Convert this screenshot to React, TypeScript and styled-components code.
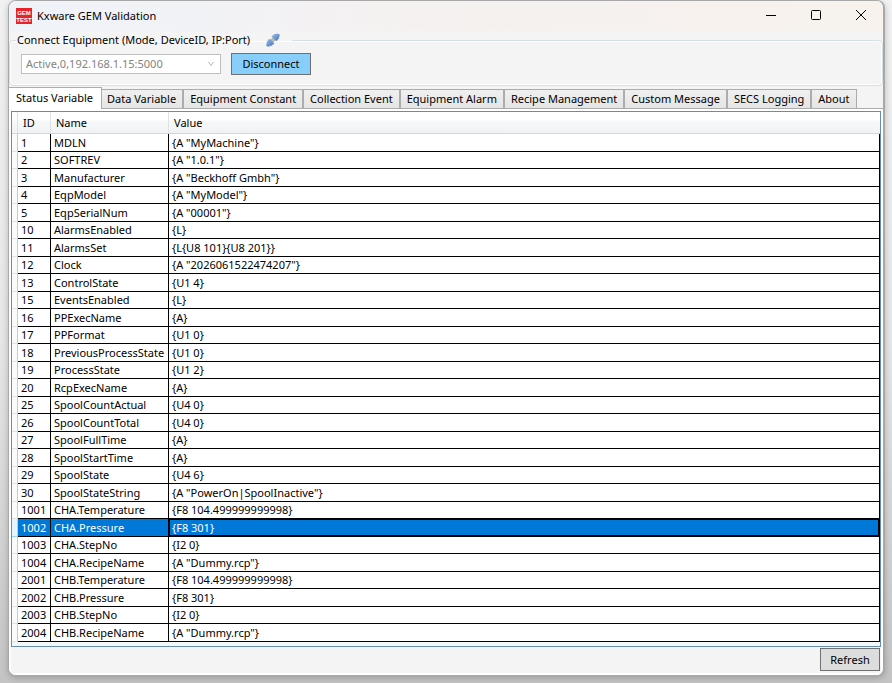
import React, { useState } from "react";
import styled, { createGlobalStyle, css } from "styled-components";

const GlobalStyle = createGlobalStyle`
  *, *::before, *::after { box-sizing: border-box; }
  body {
    margin: 0;
    font-family: "Noto Sans", "Open Sans", sans-serif;
    font-size: 11px;
    line-height: 16px;
    color: #000;
  }
  button, select { font: inherit; color: inherit; }
`;

const Desktop = styled.div`
  display: flex;
  min-height: 100vh;
  padding: 0 7px 7px 8px;
  background: linear-gradient(#f1f1f1, #e6e6e6 50%, #c4c4c4);
`;

const Window = styled.main`
  display: flex;
  flex: 1;
  flex-direction: column;
  min-width: 0;
  overflow: hidden;
  border: 1px solid #a8a8a8;
  border-right-width: 2px;
  border-radius: 8px;
  background: #f4f4f4;
  box-shadow: 0 2px 6px rgba(0, 0, 0, 0.22);
`;

const TitleBar = styled.header`
  display: flex;
  align-items: center;
  height: 30px;
  padding-left: 7px;
  background: linear-gradient(90deg, #eff3f9, #f5f1f0 50%, #f7f2ec);
`;

const Title = styled.h1`
  flex: 1;
  margin: 0 0 0 5px;
  font-size: 11px;
  font-weight: 400;
`;

const Caption = styled.button`
  display: grid;
  place-items: center;
  width: 45px;
  height: 30px;
  padding: 0 0 2px;
  border: 0;
  background: none;
`;

const Group = styled.fieldset`
  display: flex;
  align-items: center;
  gap: 10px;
  min-width: 0;
  margin: 0;
  padding: 4px 11px 10px;
  border: 1px solid #d5dfe5;
  border-radius: 4px;
  box-shadow: inset 0 0 0 1px #fff;
`;

const Legend = styled.legend`
  display: flex;
  align-items: center;
  gap: 16px;
  height: 18px;
  margin-left: -5px;
  padding: 0 12px 0 1px;
`;

const SelectBox = styled.div`
  display: grid;
  width: 200px;
  height: 20px;
  border: 1px solid #bfbfbf;
  background: #fff;

  > * { grid-area: 1 / 1; }
  svg { place-self: center end; margin-right: 6px; pointer-events: none; }
`;

const Select = styled.select`
  width: 100%;
  padding: 0 4px;
  border: 0;
  appearance: none;
  background: transparent;
  color: #838383;
  opacity: 1;
`;

const PushButton = styled.button<{ $primary?: boolean }>`
  width: ${(p) => (p.$primary ? "80px" : "60px")};
  height: ${(p) => (p.$primary ? "22px" : "23px")};
  padding: 0;
  border: 1px solid #707070;
  background: ${(p) => (p.$primary ? "#87cefa" : "#dddddd")};
`;

const TabStrip = styled.div`
  display: flex;
  align-items: flex-end;
  height: 22px;
`;

const Tab = styled.button<{ $active: boolean }>`
  position: relative;
  height: 19px;
  padding: 0 6px;
  border: 1px solid #acacac;
  border-bottom: 0;
  background: linear-gradient(#f0f0f0, #e5e5e5);
  white-space: nowrap;

  ${(p) =>
    p.$active &&
    css`
      height: 22px;
      margin-bottom: -1px;
      padding: 0 8px 2px 7px;
      border-left: 0;
      background: #fff;
      z-index: 1;

      & + button { border-left: 0; padding-left: 5px; }
    `}
`;

const Panel = styled.section`
  display: flex;
  flex: 1;
  flex-direction: column;
  padding: 2px;
  border-top: 1px solid #acacac;
  background: #fff;
`;

const GridFrame = styled.div`
  flex: 1;
  border: 1px solid #688caf;
  background: #f4f7f7;
`;

const DataGrid = styled.table`
  width: 100%;
  table-layout: fixed;
  border-collapse: separate;
  border-spacing: 0;
`;

const Head = styled.th`
  height: 22px;
  padding: 0 5px;
  border-bottom: 1px solid #d5d5d5;
  border-right: 1px solid #dfe1e4;
  background: linear-gradient(#fff, #fff 40%, #f7f8fa 41%, #f0f2f4);
  font-weight: 400;
  text-align: left;

  &:last-child { border-right: 0; }
`;

const Grip = styled.td`
  padding: 0;
  border-right: 1px solid #c9cacb;
  border-bottom: 1px solid #e2e3e4;
  background: #fafbfb;
`;

const Cell = styled.td<{ $focused?: boolean }>`
  padding: 0 3px;
  overflow: hidden;
  border-right: 1px solid #000;
  border-bottom: 1px solid #000;
  white-space: nowrap;
  ${(p) => p.$focused && "box-shadow: inset 1px 1px #000, inset -1px -1px #000;"}
`;

const Row = styled.tr<{ $selected: boolean }>`
  height: 17px;
  background: #fff;
  &:nth-child(odd) { height: 18px; }

  ${(p) =>
    p.$selected &&
    css`
      background: #0078d7;
      color: #fff;
      ${Grip} { background: #e6f6fd; border-color: #99d9f5; }
    `}
`;

const Footer = styled.footer`
  display: flex;
  justify-content: flex-end;
  padding: 1px 1px 2px;
  background: #f4f4f4;
`;

const tabs = [
  "Status Variable", "Data Variable", "Equipment Constant", "Collection Event",
  "Equipment Alarm", "Recipe Management", "Custom Message", "SECS Logging", "About",
];

const variables: [number, string, string][] = [
  [1, "MDLN", '{A "MyMachine"}'],
  [2, "SOFTREV", '{A "1.0.1"}'],
  [3, "Manufacturer", '{A "Beckhoff Gmbh"}'],
  [4, "EqpModel", '{A "MyModel"}'],
  [5, "EqpSerialNum", '{A "00001"}'],
  [10, "AlarmsEnabled", "{L}"],
  [11, "AlarmsSet", "{L{U8 101}{U8 201}}"],
  [12, "Clock", '{A "2026061522474207"}'],
  [13, "ControlState", "{U1 4}"],
  [15, "EventsEnabled", "{L}"],
  [16, "PPExecName", "{A}"],
  [17, "PPFormat", "{U1 0}"],
  [18, "PreviousProcessState", "{U1 0}"],
  [19, "ProcessState", "{U1 2}"],
  [20, "RcpExecName", "{A}"],
  [25, "SpoolCountActual", "{U4 0}"],
  [26, "SpoolCountTotal", "{U4 0}"],
  [27, "SpoolFullTime", "{A}"],
  [28, "SpoolStartTime", "{A}"],
  [29, "SpoolState", "{U4 6}"],
  [30, "SpoolStateString", '{A "PowerOn|SpoolInactive"}'],
  [1001, "CHA.Temperature", "{F8 104.499999999998}"],
  [1002, "CHA.Pressure", "{F8 301}"],
  [1003, "CHA.StepNo", "{I2 0}"],
  [1004, "CHA.RecipeName", '{A "Dummy.rcp"}'],
  [2001, "CHB.Temperature", "{F8 104.499999999998}"],
  [2002, "CHB.Pressure", "{F8 301}"],
  [2003, "CHB.StepNo", "{I2 0}"],
  [2004, "CHB.RecipeName", '{A "Dummy.rcp"}'],
];

const AppLogo = () => (
  <svg width="16" height="16" viewBox="0 0 16 16" aria-hidden="true">
    <rect width="16" height="16" fill="#e8232b" />
    <g fill="#fff" fontFamily="Liberation Sans, sans-serif" fontWeight="700" fontSize="6" textAnchor="middle">
      <text x="8" y="7">GEM</text>
      <text x="8" y="14">TEST</text>
    </g>
  </svg>
);

const PlugIcon = () => (
  <svg width="14" height="14" viewBox="0 0 14 14" aria-hidden="true">
    <defs>
      <linearGradient id="plug" x1="0" y1="0" x2="1" y2="1">
        <stop offset="0" stopColor="#9dbfea" />
        <stop offset="1" stopColor="#3f6fb8" />
      </linearGradient>
    </defs>
    <path d="M5 9 9 5" stroke="#b9b9b9" strokeWidth="4" />
    <path d="M6 3.5 8.5 1.5 12.5 1 13.5 2 12.5 5.5 10.5 8Z" fill="url(#plug)" stroke="#6a92ce" strokeWidth=".6" />
    <path d="M3.5 6 8 10.5 5.5 12.5 1.5 13.5 .5 12.5 1.5 8.5Z" fill="url(#plug)" stroke="#6a92ce" strokeWidth=".6" />
  </svg>
);

export default function App() {
  const [tab, setTab] = useState(0);
  const [selected, setSelected] = useState(1002);

  return (
    <>
      <GlobalStyle />
      <Desktop>
        <Window>
          <TitleBar>
            <AppLogo />
            <Title>Kxware GEM Validation</Title>
            <Caption aria-label="Minimize">
              <svg width="10" height="10"><path d="M0 5.5H10" stroke="#000" /></svg>
            </Caption>
            <Caption aria-label="Maximize">
              <svg width="10" height="10"><rect x=".5" y=".5" width="9" height="9" rx="1" fill="none" stroke="#000" /></svg>
            </Caption>
            <Caption aria-label="Close">
              <svg width="10" height="10"><path d="M0 0 10 10M10 0 0 10" stroke="#000" /></svg>
            </Caption>
          </TitleBar>
          <Group>
            <Legend>
              Connect Equipment (Mode, DeviceID, IP:Port)
              <PlugIcon />
            </Legend>
            <SelectBox>
              <Select aria-label="Connection" disabled>
                <option>Active,0,192.168.1.15:5000</option>
              </Select>
              <svg width="6" height="6"><path d="M.5 1 3 4.5 5.5 1" fill="none" stroke="#b4b4b4" /></svg>
            </SelectBox>
            <PushButton $primary>Disconnect</PushButton>
          </Group>
          <TabStrip role="tablist">
            {tabs.map((label, i) => (
              <Tab key={label} role="tab" aria-selected={i === tab} $active={i === tab} onClick={() => setTab(i)}>
                {label}
              </Tab>
            ))}
          </TabStrip>
          <Panel role="tabpanel">
            <GridFrame>
              <DataGrid>
                <colgroup>
                  <col width="6" />
                  <col width="33" />
                  <col width="118" />
                  <col />
                </colgroup>
                <thead>
                  <tr>
                    <Head aria-label="Row" />
                    <Head>ID</Head>
                    <Head>Name</Head>
                    <Head>Value</Head>
                  </tr>
                </thead>
                <tbody>
                  {variables.map(([id, name, value]) => (
                    <Row key={id} $selected={id === selected} onClick={() => setSelected(id)}>
                      <Grip />
                      <Cell>{id}</Cell>
                      <Cell>{name}</Cell>
                      <Cell $focused={id === selected}>{value}</Cell>
                    </Row>
                  ))}
                </tbody>
              </DataGrid>
            </GridFrame>
            <Footer>
              <PushButton>Refresh</PushButton>
            </Footer>
          </Panel>
        </Window>
      </Desktop>
    </>
  );
}
